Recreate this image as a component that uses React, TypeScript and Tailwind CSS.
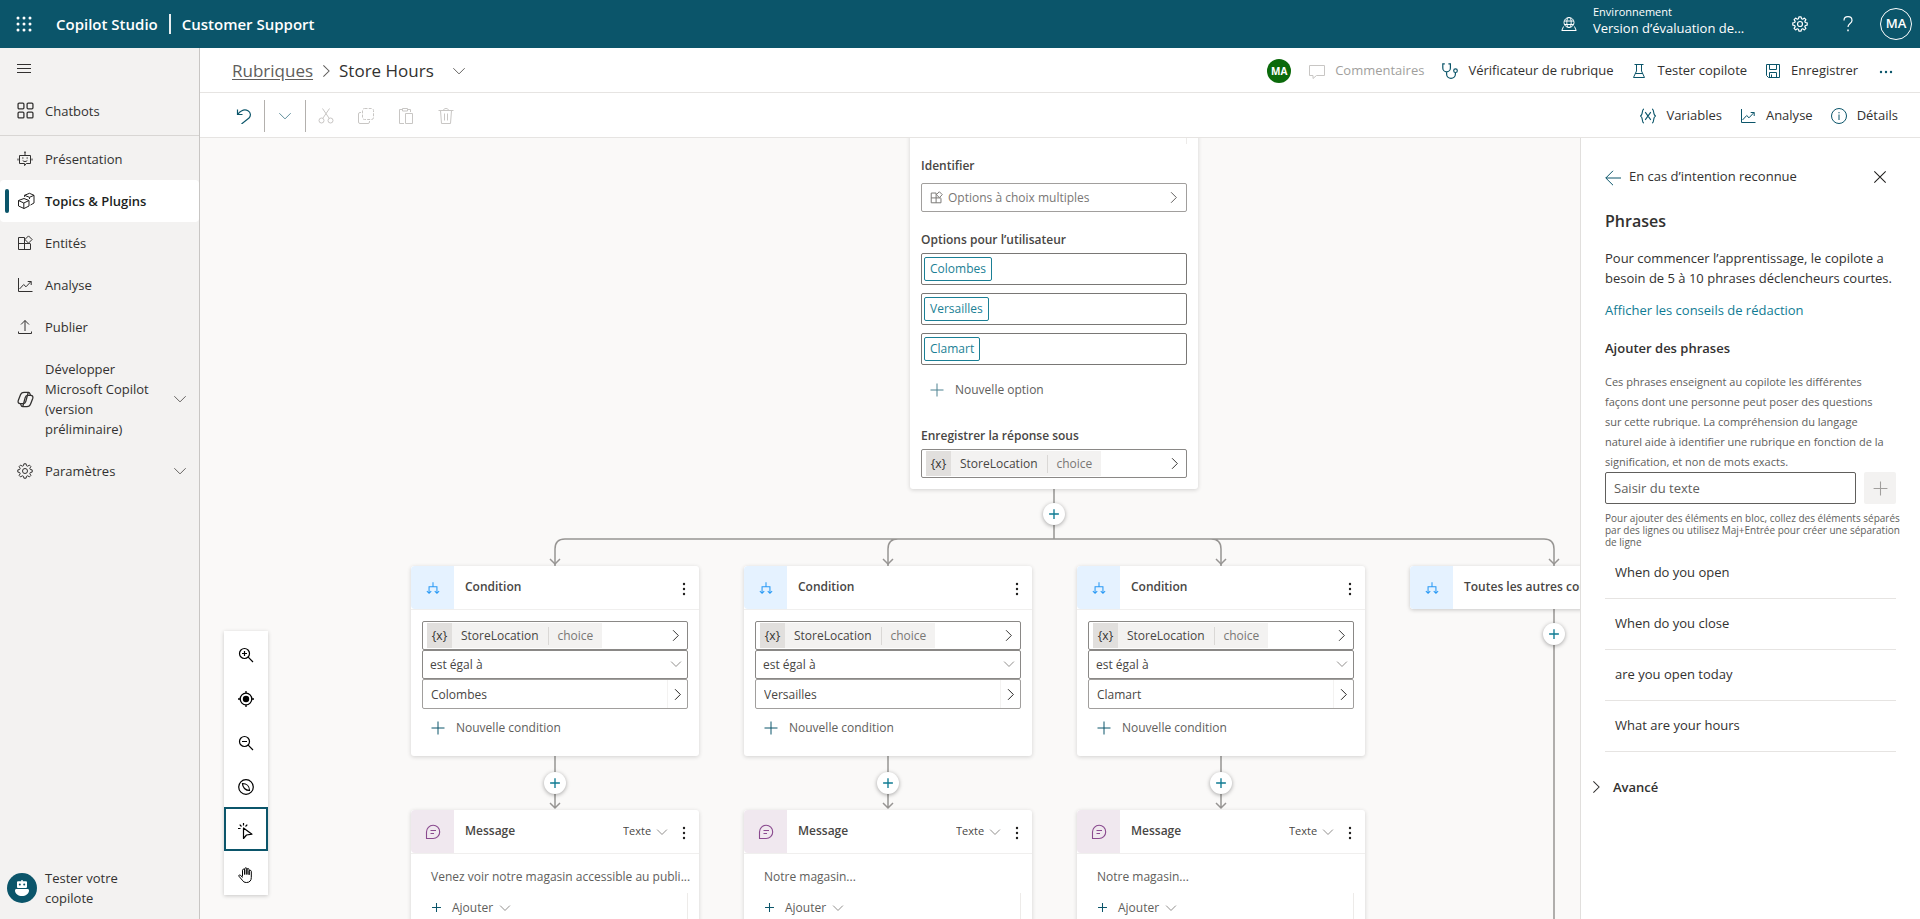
import React from "react";

type IconProps = { className?: string; children: React.ReactNode; box?: number; sw?: number };

function Icon({ className = "size-4", children, box = 16, sw = 1 }: IconProps) {
  return (
    <svg
      viewBox={`0 0 ${box} ${box}`}
      className={`shrink-0 ${className}`}
      fill="none"
      stroke="currentColor"
      strokeWidth={sw}
      aria-hidden="true"
    >
      {children}
    </svg>
  );
}

const ChevronRight = ({ className }: { className?: string }) => (
  <Icon className={className} sw={1.200}><path d="M5 1.500 11.500 8 5 14.500" /></Icon>
);
const ChevronDown = ({ className }: { className?: string }) => (
  <Icon className={className} sw={1.100}><path d="M1.500 4.800 8 11.300l6.500-6.500" /></Icon>
);
const Plus = ({ className, sw }: { className?: string; sw?: number }) => (
  <Icon className={className} sw={sw}><path d="M8 1.500v13M1.500 8h13" /></Icon>
);
const GearPath = () => (
  <>
    <path d="M6.900.8h2.200l.4 1.900 1.200.5L12.400 2.100 13.900 3.600l-1.100 1.700.5 1.200 1.900.4v2.200l-1.900.4-.5 1.200 1.100 1.700-1.500 1.500-1.700-1.100-1.200.5-.4 1.900H6.900l-.4-1.900-1.200-.5-1.700 1.100-1.500-1.500 1.100-1.700-.5-1.200-1.900-.4V6.900l1.900-.4.5-1.200L2.100 3.600l1.500-1.500 1.700 1.100 1.200-.5z" strokeLinejoin="round" />
    <circle cx="8" cy="8" r="2.500" />
  </>
);
const EntityPath = () => (
  <path d="M7.500 2.500h-6v12h12v-5.500M1.500 8.500h12M7.500 2.500v12M11.500.9l3.600 3.600-3.600 3.600-3.600-3.600z" />
);
const ChartPath = () => (
  <path d="M1.500 1v13.500H15.500M2.500 12l4.200-4.500 2.300 2.300 5-5.300M10.700 4.500h3.500V8" />
);

const CopilotRibbon = () => (
  <path d="M6.600 1.200h4L8.300 9.800c-.4 1.400-1 2-2.300 2H3c-1.800 0-2.300-1.300-1.800-2.900L3.300 3.600c.5-1.600 1.400-2.400 3.300-2.400zM10.600 1.200c1 0 1.500.7 1.700 1.700l.4 1.300" />
);

const navIcons = {
  bot: (
    <Icon className="size-4">
      <path d="M2.500 4.500h11v8H9.300L7.600 14.600V12.500H2.500zM8 4.500V1.500M1 7.500v2M15 7.500v2M5.700 9.500c1.300 1.400 3.300 1.400 4.600 0" />
      <path d="M8 .6v1.500M5.800 6.600v1M10.200 6.600v1" strokeWidth="1.400" />
    </Icon>
  ),
  topics: (
    <Icon className="size-[18px]" box={18}>
      <path d="M1.500 8.500 7 6.500l5 2v5.500l-5 2.500-5.500-2.500zM1.500 8.500 6.800 11 12 8.500M6.800 11v5.500M7.500 4.800v-1.500L12.500 1.300l4.500 2v7.700l-3.500 2M7.500 3.300l5 2 4.500-2M12.500 5.300v1.700" strokeLinejoin="round" />
    </Icon>
  ),
  entity: <Icon className="size-4"><EntityPath /></Icon>,
  chart: <Icon className="size-4"><ChartPath /></Icon>,
  publish: (
    <Icon className="size-4"><path d="M8 12V1.500M4 5.500l4-4 4 4M1.500 12.500v2h13v-2" /></Icon>
  ),
  copilot: (
    <Icon className="size-[17px]" sw={1.200}>
      <CopilotRibbon />
      <g transform="rotate(180 8 8)"><CopilotRibbon /></g>
    </Icon>
  ),
  gear: <Icon className="size-4"><GearPath /></Icon>,
};

type NavItem = { label: string; icon: keyof typeof navIcons; active?: boolean; expandable?: boolean };

const navItems: NavItem[] = [
  { label: "Présentation", icon: "bot" },
  { label: "Topics & Plugins", icon: "topics", active: true },
  { label: "Entités", icon: "entity" },
  { label: "Analyse", icon: "chart" },
  { label: "Publier", icon: "publish" },
  { label: "Développer Microsoft Copilot (version préliminaire)", icon: "copilot", expandable: true },
  { label: "Paramètres", icon: "gear", expandable: true },
];

function TopBar() {
  return (
    <header className="flex h-12 shrink-0 items-center bg-[#0b556a] pr-2 text-white">
      <button className="flex size-12 items-center justify-center" aria-label="Lanceur d'applications">
        <svg viewBox="0 0 16 16" className="size-4" fill="currentColor" aria-hidden="true">
          {[2, 8, 14].map((y) => [2, 8, 14].map((x) => <circle key={`${x}-${y}`} cx={x} cy={y} r="1.500" />))}
        </svg>
      </button>
      <div className="ml-2 flex items-center text-[15px] font-semibold">
        <span>Copilot Studio</span>
        <span className="mx-[11px] h-5 w-[2px] bg-[#e8eef0]" />
        <span>Customer Support</span>
      </div>
      <div className="ml-auto flex items-center">
        <Icon className="size-4">
          <circle cx="8" cy="6.500" r="5" />
          <ellipse cx="8" cy="6.500" rx="2.200" ry="5" />
          <path d="M3.300 5h9.400M3.300 8.500h9.400M2.500 10.500l-1.700 4h14.400l-1.700-4" />
        </Icon>
        <div className="ml-4 w-[199px] pb-2">
          <div className="text-[11px] leading-4">Environnement</div>
          <div className="text-[13px] leading-4">Version d’évaluation de...</div>
        </div>
        <button aria-label="Paramètres"><Icon className="size-4" sw={1.200}><GearPath /></Icon></button>
        <button aria-label="Aide" className="ml-8">
          <Icon className="size-4" sw={1.200}>
            <path d="M4 4.500C4 2.300 5.600 .7 8 .7s4 1.500 4 3.700c0 3.300-4 3-4 6.600" />
            <path d="M8 13.500v1.800" strokeWidth="1.500" />
          </Icon>
        </button>
        <button className="ml-6 flex size-8 items-center justify-center rounded-full border border-white text-[13px] font-semibold">MA</button>
      </div>
    </header>
  );
}

function Sidebar() {
  return (
    <nav className="flex w-[200px] shrink-0 flex-col border-r border-[#c8c6c4] bg-[#f3f2f1] text-[13px] leading-5 text-[#323130]">
      <button className="flex h-10 items-center pl-4" aria-label="Menu">
        <Icon className="size-4"><path d="M1 4.500h14M1 8.500h14M1 12.500h14" /></Icon>
      </button>
      <a href="#chatbots" className="flex h-12 items-center gap-[11px] border-b border-[#d8d6d4] pb-[2px] pl-[17px]">
        <Icon className="size-[17px]" sw={1.200}>
          <rect x="1" y="1" width="5.500" height="5.500" rx="1" />
          <rect x="9.500" y="1" width="5.500" height="5.500" rx="1" />
          <rect x="1" y="9.500" width="5.500" height="5.500" rx="1" />
          <rect x="9.500" y="9.500" width="5.500" height="5.500" rx="1" />
        </Icon>
        Chatbots
      </a>
      <div className="pt-[2px]">
        {navItems.map((item) => (
          <a
            key={item.label}
            href="#"
            className={
              item.active
                ? "relative flex items-center rounded-sm bg-white py-[11px] pr-3 pl-[17px] font-semibold text-[#201f1e]"
                : "relative flex items-center py-[11px] pr-3 pl-[17px]"
            }
          >
            {item.active && <span className="absolute left-[5px] h-6 w-1 rounded-sm bg-[#0b556a]" />}
            <span className="flex w-7 shrink-0 items-center">{navIcons[item.icon]}</span>
            <span className={item.expandable ? "w-[120px]" : "flex-1"}>{item.label}</span>
            {item.expandable && <ChevronDown className="ml-auto size-[14px] text-[#605e5c]" />}
          </a>
        ))}
      </div>
      <a href="#test" className="mt-auto flex items-center gap-2 pb-[11px] pl-[7px]">
        <span className="flex size-[30px] items-center justify-center rounded-full bg-[#0b556a] text-white">
          <svg viewBox="0 0 16 16" className="size-4" fill="currentColor" aria-hidden="true">
            <path d="M4 1.200h8a1 1 0 0 1 1 1V7a1 1 0 0 1-1 1H4a1 1 0 0 1-1-1V2.200a1 1 0 0 1 1-1zM7.300 0h1.400v1.500H7.300zM2.500 9h11c1 0 1.500.6 1.500 1.500C15 14 11.500 16 8 16s-7-2-7-5.500C1 9.600 1.500 9 2.500 9z" />
            <circle cx="5.800" cy="4.600" r="1" fill="#0b556a" />
            <circle cx="10.200" cy="4.600" r="1" fill="#0b556a" />
          </svg>
        </span>
        <span className="w-24">Tester votre copilote</span>
      </a>
    </nav>
  );
}

function CommandButton({ icon, label, disabled }: { icon: React.ReactNode; label: string; disabled?: boolean }) {
  return (
    <button disabled={disabled} className={disabled ? "flex items-center gap-2 text-[#a19f9d]" : "flex items-center gap-2 text-[#323130]"}>
      <span className={disabled ? "flex size-5 items-center justify-center text-[#c8c6c4]" : "flex size-5 items-center justify-center text-[#0b556a]"}>{icon}</span>
      {label}
    </button>
  );
}

function CommandBars() {
  return (
    <div className="shrink-0 bg-white text-[13px]">
      <div className="flex h-[45px] items-center border-b border-[#e6e4e2] pt-[2px] pr-[22px] pl-8">
        <div className="flex items-center text-[17px]">
          <a href="#topics" className="text-[#605e5c] underline underline-offset-2">Rubriques</a>
          <ChevronRight className="mx-[6px] size-[14px] text-[#605e5c]" />
          <span className="text-[#323130]">Store Hours</span>
          <button aria-label="Changer de rubrique" className="ml-[18px]"><ChevronDown className="size-[14px] text-[#605e5c]" /></button>
        </div>
        <div className="ml-auto flex items-center gap-4">
          <span className="flex size-6 items-center justify-center rounded-full bg-[#0b6a0b] text-[10px] font-bold text-white">MA</span>
          <CommandButton disabled label="Commentaires" icon={<Icon><path d="M.5 2.500h15v10H7.500L4 15.500v-3H.5z" strokeLinejoin="round" /></Icon>} />
          <CommandButton
            label="Vérificateur de rubrique"
            icon={
              <Icon sw={1.200}>
                <path d="M2.800.8H.8V5a3.800 3.800 0 0 0 7.600 0V.8H6.400M4.600 8.800V11a4.400 4.400 0 0 0 8.800 0V9.500" />
                <circle cx="13.500" cy="7.700" r="1.800" />
              </Icon>
            }
          />
          <CommandButton label="Tester copilote" icon={<Icon><path d="M3.500 1.500h9M5.500 1.500V8l-3 6.500h11l-3-6.500V1.500M4.200 10.500h7.600" /></Icon>} />
          <CommandButton label="Enregistrer" icon={<Icon><path d="M1.500 1.500h13v13H3.500l-2-2zM4.500 1.500v5h7v-5M4.500 14.500v-5h7v5M6.500 11.500v3" /></Icon>} />
          <button aria-label="Plus" className="flex w-6 justify-center text-[#0b556a]">
            <svg viewBox="0 0 16 16" className="size-4" fill="currentColor" aria-hidden="true">
              <circle cx="3" cy="9" r="1.200" /><circle cx="8" cy="9" r="1.200" /><circle cx="13" cy="9" r="1.200" />
            </svg>
          </button>
        </div>
      </div>
      <div className="flex h-[45px] items-center border-b border-[#e6e4e2] pt-[2px] pr-[22px] pl-9">
        <button aria-label="Annuler" className="text-[#0b556a]">
          <Icon className="size-4" sw={1.200}><path d="M1.500 1.500v5h5M1.700 6.300C5 2.500 9 1 12 2.800c3 1.900 3 5 1 7.200L5.500 16" /></Icon>
        </button>
        <span className="ml-3 h-8 w-px bg-[#b3b0ad]" />
        <button aria-label="Historique" className="mx-[13px]"><ChevronDown className="size-[14px] text-[#5b8a98]" /></button>
        <span className="h-8 w-px bg-[#b3b0ad]" />
        <div className="ml-3 flex items-center gap-6 text-[#c8c6c4]">
          <button disabled aria-label="Couper">
            <Icon><circle cx="3.500" cy="12.500" r="2.500" /><circle cx="12.500" cy="12.500" r="2.500" /><path d="M4.800 10.300 11.500.5M11.200 10.300 4.500.5" /></Icon>
          </button>
          <button disabled aria-label="Copier">
            <Icon><rect x="4.500" y=".5" width="11" height="11" rx="2" strokeDasharray="3 1.200" /><path d="M3 4.500H2A1.500 1.500 0 0 0 .5 6v8A1.500 1.500 0 0 0 2 15.500h8a1.500 1.500 0 0 0 1.500-1.500v-1" /></Icon>
          </button>
          <button disabled aria-label="Coller">
            <Icon><path d="M6 15.500H1.500v-14h3M9.500 1.500h3V4M4.500.5h5V3h-5zM7.500 5.500h7v10h-7z" /></Icon>
          </button>
          <button disabled aria-label="Supprimer">
            <Icon><path d="M.5 2.500h15M5.500 2.500C5.500 1.200 6.500.5 8 .5s2.500.7 2.500 2M2.500 2.500l1 13h9l1-13M6.500 5.500v7M9.500 5.500v7" /></Icon>
          </button>
        </div>
        <div className="ml-auto flex items-center gap-4">
          <CommandButton label="Variables" icon={<Icon sw={1.100}><path d="M4 1C1.500 1 3.300 7 .5 8c2.800 1 1 7 3.500 7M12 1c2.500 0 .7 6 3.500 7-2.800 1-1 7-3.500 7M5.200 4.200l5.600 7.600M10.800 4.200l-5.600 7.600" /></Icon>} />
          <CommandButton label="Analyse" icon={<Icon><ChartPath /></Icon>} />
          <CommandButton label="Détails" icon={<Icon><circle cx="8" cy="8" r="7.500" /><path d="M8 6.500V12M8 4v1.300" /></Icon>} />
        </div>
      </div>
    </div>
  );
}

function VariableField() {
  return (
    <button className="flex h-[29px] w-full items-center rounded-[2px] border border-[#8a8886] bg-white px-1 text-left">
      <span className="flex h-[25px] w-[25px] items-center justify-center bg-[#e1dfdd] text-xs text-[#323130]">{"{x}"}</span>
      <span className="flex h-[25px] items-center bg-[#f3f2f1]">
        <span className="px-[9px] text-[#484644]">StoreLocation</span>
        <span className="h-[18px] w-px bg-[#dad8d6]" />
        <span className="px-[9px] text-[#797775]">choice</span>
      </span>
      <ChevronRight className="mr-px ml-auto size-[13px] text-[#323130]" />
    </button>
  );
}

function Kebab() {
  return (
    <button aria-label="Options du nœud" className="text-[#201f1e]">
      <svg viewBox="0 0 4 16" className="h-4 w-1" fill="currentColor" aria-hidden="true">
        <circle cx="2" cy="4" r="1.200" /><circle cx="2" cy="9" r="1.200" /><circle cx="2" cy="14" r="1.200" />
      </svg>
    </button>
  );
}

const BranchIcon = () => (
  <span className="flex w-[43px] shrink-0 items-center justify-center rounded-l-sm bg-[#e5f2ff] text-[#2899f5]">
    <Icon className="size-[14px]" sw={1.200}><path d="M8 1.500V6.500M3.500 14V6.500h9V14M1 11.500l2.500 2.500L6 11.500M10 11.500l2.500 2.500 2.500-2.500" /></Icon>
  </span>
);

function ConditionNode({ value, index }: { value: string; index: number }) {
  return (
    <section className="h-[190px] w-[288px] rounded-[3px] bg-white text-xs shadow-[0_1px_4px_rgba(0,0,0,0.16)]">
      <div className="flex h-11 border-b border-[#f0efee]">
        <BranchIcon />
        <h3 className="flex flex-1 items-center pb-[2px] pl-[11px] font-semibold text-[#484644]">Condition</h3>
        <div className="mr-[13px] flex items-center"><Kebab /></div>
      </div>
      <div className="px-[11px] pt-[11px] text-[#484644]">
        <VariableField />
        <div className="relative">
          <select
            aria-label={`Opérateur ${index}`}
            className="h-[29px] w-full appearance-none rounded-[2px] border border-[#8a8886] bg-white pl-[7px]"
          >
            <option>est égal à</option>
          </select>
          <ChevronDown className="pointer-events-none absolute top-2 right-[6px] size-3 text-[#797775]" />
        </div>
        <div className="flex h-[30px] items-center rounded-[2px] border border-[#a19f9d]">
          <input aria-label={`Valeur ${index}`} defaultValue={value} className="h-full min-w-0 flex-1 pl-2 outline-none" />
          <button aria-label="Choisir une valeur" className="flex h-full w-5 items-center justify-center border-l border-[#f3f2f1] text-[#201f1e]">
            <ChevronRight className="size-[13px]" />
          </button>
        </div>
        <button className="mt-[11px] ml-2 flex items-center gap-[10px] leading-4 text-[#605e5c]">
          <Plus className="size-4 text-[#0b556a]" />
          Nouvelle condition
        </button>
      </div>
    </section>
  );
}

function MessageNode({ text, index }: { text: string; index: number }) {
  return (
    <section className="h-[190px] w-[288px] rounded-[3px] bg-white text-xs shadow-[0_1px_4px_rgba(0,0,0,0.16)]">
      <div className="flex h-11 border-b border-[#f0efee]">
        <span className="flex w-[43px] shrink-0 items-center justify-center rounded-l-sm bg-[#f0e8ef] text-[#8a4a8f]">
          <Icon sw={1.100}><path d="M1.500 14.500V8A6.600 6.600 0 1 1 8 14.500zM5.500 6.500h5.500M5.500 9.500h3.500" strokeLinejoin="round" /></Icon>
        </span>
        <h3 className="flex flex-1 items-center pb-[2px] pl-[11px] font-semibold text-[#484644]">Message</h3>
        <div className="relative mr-3 flex items-center">
          <select aria-label={`Type de message ${index}`} className="w-[47px] appearance-none text-[11px] text-[#484644]">
            <option>Texte</option>
          </select>
          <ChevronDown className="pointer-events-none absolute right-[2px] size-3 text-[#797775]" />
        </div>
        <div className="mr-[13px] flex items-center"><Kebab /></div>
      </div>
      <div className="text-[#605e5c]">
        <p className="pt-[13px] pl-5 leading-5 whitespace-nowrap">{text}</p>
        <div className="mt-[6px] mr-[11px] ml-5 flex h-24 border-r border-[#edebe9]">
          <button className="flex h-[29px] items-center gap-[10px]">
            <Plus className="size-[11px] text-[#0b556a]" sw={1.500} />
            Ajouter
            <ChevronDown className="-ml-1 size-3 text-[#797775]" />
          </button>
        </div>
      </div>
    </section>
  );
}

function QuestionNode() {
  return (
    <section className="w-[288px] rounded-b-[3px] bg-white px-[11px] pb-[11px] text-xs text-[#484644] shadow-[0_1px_4px_rgba(0,0,0,0.16)]">
      <div className="h-4 border-r border-[#edebe9]" />
      <h3 className="mt-3 leading-5 font-semibold">Identifier</h3>
      <button className="mt-[7px] flex h-[29px] w-full items-center rounded-[2px] border border-[#a19f9d] pr-[6px] pl-2 text-[#797775]">
        <Icon className="size-[13px]" sw={1.200}><EntityPath /></Icon>
        <span className="ml-[5px]">Options à choix multiples</span>
        <ChevronRight className="ml-auto size-[13px] text-[#605e5c]" />
      </button>
      <h3 className="mt-[18px] leading-5 font-semibold">Options pour l’utilisateur</h3>
      <div className="mt-[3px] flex flex-col gap-2">
        {["Colombes", "Versailles", "Clamart"].map((option) => (
          <div key={option} className="flex h-8 items-center rounded-[2px] border border-[#797775] px-[2px]">
            <button className="h-6 rounded-[2px] border border-[#1b7f95] px-[5px] text-[#1b7f95]">{option}</button>
            <input aria-label={`Option ${option}`} className="min-w-0 flex-1 outline-none" />
          </div>
        ))}
      </div>
      <button className="mt-[15px] ml-2 flex items-center gap-[10px] leading-5 text-[#605e5c]">
        <Plus className="size-4 text-[#4d8190]" />
        Nouvelle option
      </button>
      <h3 className="mt-[26px] mb-[3px] leading-5 font-semibold">Enregistrer la réponse sous</h3>
      <VariableField />
    </section>
  );
}

function AddNode() {
  return (
    <button aria-label="Ajouter un nœud" className="flex size-[22px] items-center justify-center rounded-full bg-white text-[#0f7b93] shadow-[0_1px_4px_rgba(0,0,0,0.35)]">
      <Plus className="size-3" sw={1.800} />
    </button>
  );
}

const columns = [
  { x: 211, value: "Colombes", message: "Venez voir notre magasin accessible au publi..." },
  { x: 544, value: "Versailles", message: "Notre magasin..." },
  { x: 877, value: "Clamart", message: "Notre magasin..." },
];

const addPoints = [
  { x: 843, y: 365 },
  { x: 344, y: 634 },
  { x: 677, y: 634 },
  { x: 1010, y: 634 },
  { x: 1343, y: 485 },
];

function ZoomTools() {
  const tools = [
    { label: "Zoom avant", icon: <Icon sw={1.200}><circle cx="6.500" cy="6.500" r="5" /><path d="m10.200 10.200 4.800 4.800M4 6.500h5M6.500 4v5" /></Icon> },
    { label: "Réinitialiser", icon: <Icon sw={1.300}><circle cx="8" cy="8" r="5.800" /><circle cx="8" cy="8" r="3.200" fill="currentColor" stroke="none" /><path d="M8 0v2M8 14v2M0 8h2M14 8h2" /></Icon> },
    { label: "Zoom arrière", icon: <Icon sw={1.200}><circle cx="6.500" cy="6.500" r="5" /><path d="m10.200 10.200 4.800 4.800M4 6.500h5" /></Icon> },
    { label: "Mini-carte", icon: <Icon sw={1.200}><circle cx="8" cy="8" r="7.300" /><path d="M4.500 4.500c4 0 7 2.500 7 7-4 0-7-3-7-7z" /></Icon> },
    { label: "Sélection", icon: <Icon sw={1.200}><path d="M5.500 5v10.500l3-3.500 5.500-.8zM5.500 0v2.500M1.700 1.700l1.800 1.800M0 5.500h2.500M9.300 1.700 7.500 3.500" strokeLinejoin="round" /></Icon>, active: true },
    { label: "Déplacer", icon: <Icon><path d="M4.500 9.500V3.200c0-1.400 2.200-1.400 2.200 0v4.300V1.900c0-1.500 2.200-1.500 2.200 0v5.600V2.600c0-1.400 2.200-1.400 2.200 0v5.200V4.300c0-1.300 2.200-1.300 2.200 0v6.200c0 3-1.600 5-4.800 5-2.200 0-3.200-.8-4.200-2.300L.9 9.200c-.5-1 .8-1.700 1.600-1l2 2.300" strokeLinejoin="round" /></Icon> },
  ];
  return (
    <div className="absolute bottom-6 left-6 flex flex-col bg-white shadow-[0_1px_4px_rgba(0,0,0,0.2)]">
      {tools.map((tool) => (
        <button
          key={tool.label}
          aria-label={tool.label}
          className={tool.active ? "flex size-11 items-center justify-center border-2 border-[#0b556a] pt-1" : "flex size-11 items-center justify-center pt-1"}
        >
          {tool.icon}
        </button>
      ))}
    </div>
  );
}

function Canvas() {
  return (
    <main className="relative min-w-0 flex-1 overflow-hidden bg-[#faf9f8]">
      <svg className="absolute top-0 left-0 h-[800px] w-[1400px]" fill="none" stroke="#979593" strokeWidth="1.500" aria-hidden="true">
        <path d="M854 350v51M355 428v-17q0-10 10-10H1344q10 0 10 10v17M688 428v-17q0-10 10-10M1021 428v-17q0-10-10-10" />
        {[355, 688, 1021, 1354].map((x) => <path key={x} d={`M${x - 5} 421l5 5 5-5`} />)}
        {[355, 688, 1021].map((x) => <path key={x} d={`M${x} 618v52M${x - 5} 665l5 5 5-5`} />)}
        <path d="M1354 470v330" />
      </svg>
      <div className="absolute top-[-10px] left-[710px]"><QuestionNode /></div>
      {columns.map((column, i) => (
        <React.Fragment key={column.value}>
          <div className="absolute top-[428px]" style={{ left: column.x }}><ConditionNode value={column.value} index={i + 1} /></div>
          <div className="absolute top-[672px]" style={{ left: column.x }}><MessageNode text={column.message} index={i + 1} /></div>
        </React.Fragment>
      ))}
      <section className="absolute top-[428px] left-[1210px] flex h-[43px] w-[288px] rounded-[3px] bg-white text-xs shadow-[0_1px_4px_rgba(0,0,0,0.2)]">
        <BranchIcon />
        <h3 className="flex items-center pb-[2px] pl-[11px] font-semibold whitespace-nowrap text-[#484644]">Toutes les autres conditions</h3>
      </section>
      {addPoints.map((point) => (
        <div key={`${point.x}-${point.y}`} className="absolute" style={{ left: point.x, top: point.y }}><AddNode /></div>
      ))}
      <ZoomTools />
    </main>
  );
}

function PhrasesPanel() {
  return (
    <aside className="w-[340px] shrink-0 border-l border-[#e1dfdd] bg-white px-6 text-[13px] text-[#323130]">
      <div className="mt-[29px] flex h-5 items-center">
        <button aria-label="Retour" className="mt-[2px] text-[#0b556a]"><Icon className="size-4"><path d="M16 8H.8M8 .8.8 8 8 15.200" /></Icon></button>
        <span className="ml-2 flex-1">En cas d’intention reconnue</span>
        <button aria-label="Fermer" className="mr-[9px] text-[#201f1e]"><Icon className="size-[14px]" sw={1.200}><path d="m1.500 1.500 13 13M14.500 1.500l-13 13" /></Icon></button>
      </div>
      <h2 className="mt-[22px] text-base leading-6 font-semibold">Phrases</h2>
      <p className="mt-[15px] leading-5 whitespace-nowrap">Pour commencer l’apprentissage, le copilote a<br />besoin de 5 à 10 phrases déclencheurs courtes.</p>
      <a href="#tips" className="mt-3 block leading-5 text-[#0f7b93]">Afficher les conseils de rédaction</a>
      <label htmlFor="phrase" className="mt-[18px] block leading-5 font-semibold">Ajouter des phrases</label>
      <p className="mt-[14px] text-[11px] leading-5 whitespace-nowrap text-[#605e5c]">
        Ces phrases enseignent au copilote les différentes<br />
        façons dont une personne peut poser des questions<br />
        sur cette rubrique. La compréhension du langage<br />
        naturel aide à identifier une rubrique en fonction de la<br />
        signification, et non de mots exacts.
      </p>
      <div className="flex gap-2">
        <input id="phrase" placeholder="Saisir du texte" className="h-8 min-w-0 flex-1 rounded-[2px] border border-[#605e5c] px-2 outline-none placeholder:text-[#605e5c]" />
        <button aria-label="Ajouter" disabled className="flex size-8 items-center justify-center rounded-[2px] bg-[#f3f2f1] text-[#a19f9d]"><Plus className="size-[17px]" /></button>
      </div>
      <p className="mt-2 text-[10px] leading-3 whitespace-nowrap text-[#605e5c]">
        Pour ajouter des éléments en bloc, collez des éléments séparés<br />
        par des lignes ou utilisez Maj+Entrée pour créer une séparation<br />
        de ligne
      </p>
      <ul>
        {["When do you open", "When do you close", "are you open today", "What are your hours"].map((phrase) => (
          <li key={phrase} className="flex h-[51px] items-center border-b border-[#e6e4e2] pl-[10px]">{phrase}</li>
        ))}
      </ul>
      <button className="mt-[25px] -ml-4 flex items-center gap-[10px] leading-5 font-semibold">
        <ChevronRight className="size-[14px]" />
        Avancé
      </button>
    </aside>
  );
}

export default function App() {
  return (
    <div className="flex h-screen flex-col overflow-hidden bg-white font-['Open_Sans','Noto_Sans',sans-serif]">
      <TopBar />
      <div className="flex min-h-0 flex-1">
        <Sidebar />
        <div className="flex min-w-0 flex-1 flex-col">
          <CommandBars />
          <div className="flex min-h-0 flex-1">
            <Canvas />
            <PhrasesPanel />
          </div>
        </div>
      </div>
    </div>
  );
}
